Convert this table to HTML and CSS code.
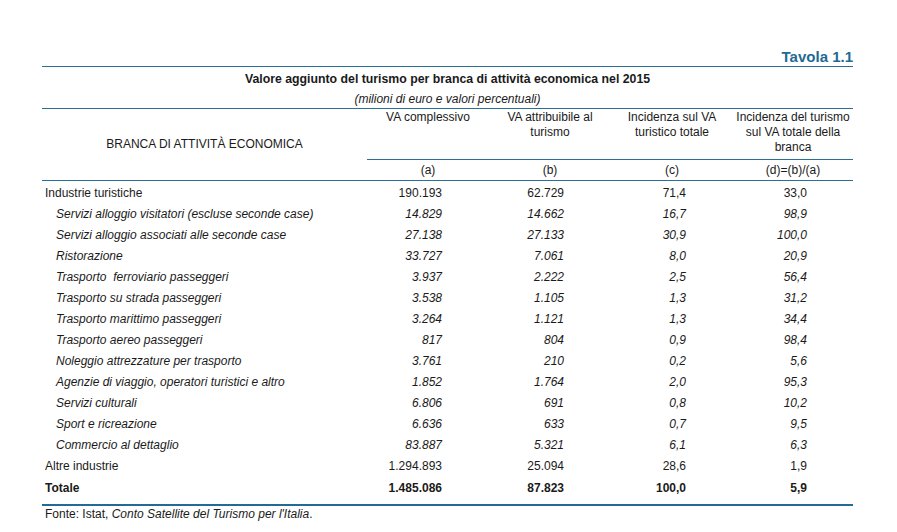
FILE: index.html
```html
<!DOCTYPE html>
<html lang="it">
<head>
<meta charset="utf-8">
<title>Tavola 1.1</title>
<link rel="stylesheet" href="styles.css">
</head>
<body>
<div class="page">
  <div class="tavola">Tavola 1.1</div>
  <table class="tab">
    <colgroup>
      <col class="c-label"><col class="c-num"><col class="c-num"><col class="c-num"><col class="c-last">
    </colgroup>
    <thead>
      <tr class="title-row"><th colspan="5">Valore aggiunto del turismo per branca di attività economica nel 2015</th></tr>
      <tr class="sub-row"><th colspan="5">(milioni di euro e valori percentuali)</th></tr>
      <tr class="head-row">
        <th rowspan="2" class="branca">BRANCA DI ATTIVITÀ ECONOMICA</th>
        <th>VA complessivo</th>
        <th>VA attribuibile al turismo</th>
        <th>Incidenza sul VA turistico totale</th>
        <th>Incidenza del turismo sul VA totale della branca</th>
      </tr>
      <tr class="key-row">
        <th>(a)</th><th>(b)</th><th>(c)</th><th>(d)=(b)/(a)</th>
      </tr>
    </thead>
    <tbody>
      <tr class="main first"><td>Industrie turistiche</td><td>190.193</td><td>62.729</td><td>71,4</td><td>33,0</td></tr>
      <tr class="sub"><td>Servizi alloggio visitatori (escluse seconde case)</td><td>14.829</td><td>14.662</td><td>16,7</td><td>98,9</td></tr>
      <tr class="sub"><td>Servizi alloggio associati alle seconde case</td><td>27.138</td><td>27.133</td><td>30,9</td><td>100,0</td></tr>
      <tr class="sub"><td>Ristorazione</td><td>33.727</td><td>7.061</td><td>8,0</td><td>20,9</td></tr>
      <tr class="sub"><td>Trasporto&nbsp; ferroviario passeggeri</td><td>3.937</td><td>2.222</td><td>2,5</td><td>56,4</td></tr>
      <tr class="sub"><td>Trasporto su strada passeggeri</td><td>3.538</td><td>1.105</td><td>1,3</td><td>31,2</td></tr>
      <tr class="sub"><td>Trasporto marittimo passeggeri</td><td>3.264</td><td>1.121</td><td>1,3</td><td>34,4</td></tr>
      <tr class="sub"><td>Trasporto aereo passeggeri</td><td>817</td><td>804</td><td>0,9</td><td>98,4</td></tr>
      <tr class="sub"><td>Noleggio attrezzature per trasporto</td><td>3.761</td><td>210</td><td>0,2</td><td>5,6</td></tr>
      <tr class="sub"><td>Agenzie di viaggio, operatori turistici e altro</td><td>1.852</td><td>1.764</td><td>2,0</td><td>95,3</td></tr>
      <tr class="sub"><td>Servizi culturali</td><td>6.806</td><td>691</td><td>0,8</td><td>10,2</td></tr>
      <tr class="sub"><td>Sport e ricreazione</td><td>6.636</td><td>633</td><td>0,7</td><td>9,5</td></tr>
      <tr class="sub"><td>Commercio al dettaglio</td><td>83.887</td><td>5.321</td><td>6,1</td><td>6,3</td></tr>
      <tr class="main"><td>Altre industrie</td><td>1.294.893</td><td>25.094</td><td>28,6</td><td>1,9</td></tr>
      <tr class="main total"><td>Totale</td><td>1.485.086</td><td>87.823</td><td>100,0</td><td>5,9</td></tr>
    </tbody>
  </table>
  <div class="rule"></div>
  <p class="fonte">Fonte: Istat, <i>Conto Satellite del Turismo per l'Italia</i>.</p>
</div>
</body>
</html>
```

FILE: styles.css
```css
html, body {
  margin: 0;
  padding: 0;
  background: #ffffff;
}

body {
  font-family: "Liberation Sans", Arial, sans-serif;
  color: #1a1a1a;
  font-size: 12px;
}

.page {
  width: 811px;
  padding: 48px 0 0 42px;
}

.tavola {
  text-align: right;
  font-weight: bold;
  font-size: 15px;
  line-height: 17px;
  color: #1f6a93;
  padding-bottom: 1px;
}

.tab {
  width: 811px;
  border-collapse: collapse;
  table-layout: fixed;
}

.c-label { width: 325px; }
.c-num { width: 122px; }
.c-last { width: 120px; }

.tab th, .tab td {
  padding: 0;
  font-weight: normal;
}

.title-row th {
  border-top: 1px solid #2b6f97;
  font-weight: bold;
  font-size: 12.3px;
  height: 21px;
  text-align: center;
  vertical-align: middle;
  padding-top: 1px;
}

.sub-row th {
  font-style: italic;
  font-size: 12px;
  height: 19px;
  text-align: center;
  vertical-align: middle;
  border-bottom: 1px solid #2b6f97;
}

.head-row th {
  text-align: center;
  vertical-align: top;
  line-height: 15px;
  height: 51px;
  padding-top: 1px;
  border-bottom: 1px solid #2b6f97;
  box-sizing: border-box;
}

.head-row th.branca {
  vertical-align: middle;
  padding-top: 0;
}

.key-row th {
  text-align: center;
  height: 20px;
  vertical-align: middle;
  border-bottom: 1px solid #2b6f97;
}

.tab tbody td {
  height: 21px;
  vertical-align: middle;
  text-align: right;
  padding-right: 47px;
}

.tab tbody td:first-child {
  text-align: left;
  padding-right: 0;
  padding-left: 3px;
}

.tab tbody td:last-child {
  padding-right: 46px;
}

.tab tbody tr.first td {
  padding-top: 1px;
}

.tab tbody tr.sub td {
  font-style: italic;
}

.tab tbody tr.sub td:first-child {
  padding-left: 14px;
}

.tab tbody tr.total td {
  font-weight: bold;
  height: 23px;
  padding-bottom: 5px;
}

.rule {
  width: 811px;
  height: 2px;
  background: #236b94;
}

.fonte {
  margin: 0;
  padding: 0 0 0 3px;
  font-size: 12px;
  line-height: 16px;
}
```
